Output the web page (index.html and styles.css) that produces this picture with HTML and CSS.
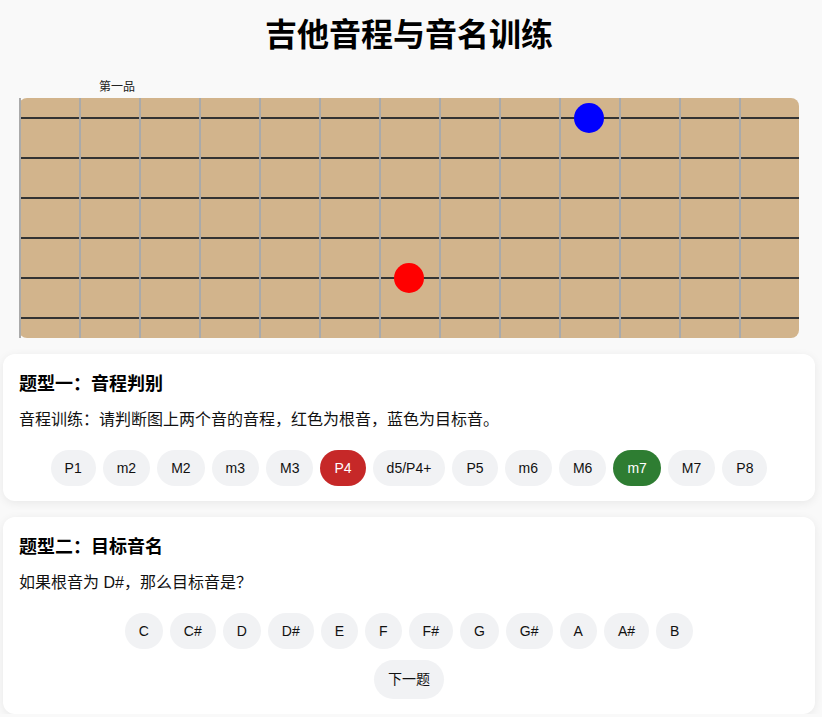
FILE: index.html
```html
<!DOCTYPE html>
<html lang="zh-CN">
<head>
<meta charset="utf-8">
<title>吉他音程与音名训练</title>
<link rel="stylesheet" href="styles.css">
</head>
<body>
<div class="app">
  <h1 class="title">吉他音程与音名训练</h1>
  <div class="fretboard-wrap">
    <div class="fret-label">第一品</div>
    <div class="board">
      <div class="strings">
        <div class="string"></div>
        <div class="string"></div>
        <div class="string"></div>
        <div class="string"></div>
        <div class="string"></div>
        <div class="string"></div>
      </div>
      <div class="frets">
        <div class="fret"></div><div class="fret"></div><div class="fret"></div><div class="fret"></div><div class="fret"></div><div class="fret"></div><div class="fret"></div><div class="fret"></div><div class="fret"></div><div class="fret"></div><div class="fret"></div><div class="fret"></div><div class="fret"></div>
      </div>
      <div class="dot dot-target"></div>
      <div class="dot dot-root"></div>
    </div>
  </div>

  <section class="card">
    <h3 class="card-title">题型一：音程判别</h3>
    <p class="card-text">音程训练：请判断图上两个音的音程，红色为根音，蓝色为目标音。</p>
    <div class="options">
      <button class="opt">P1</button>
      <button class="opt">m2</button>
      <button class="opt">M2</button>
      <button class="opt">m3</button>
      <button class="opt">M3</button>
      <button class="opt wrong">P4</button>
      <button class="opt">d5/P4+</button>
      <button class="opt">P5</button>
      <button class="opt">m6</button>
      <button class="opt">M6</button>
      <button class="opt right">m7</button>
      <button class="opt">M7</button>
      <button class="opt">P8</button>
    </div>
  </section>

  <section class="card card-two">
    <h3 class="card-title">题型二：目标音名</h3>
    <p class="card-text">如果根音为 D#，那么目标音是？</p>
    <div class="options">
      <button class="opt">C</button>
      <button class="opt">C#</button>
      <button class="opt">D</button>
      <button class="opt">D#</button>
      <button class="opt">E</button>
      <button class="opt">F</button>
      <button class="opt">F#</button>
      <button class="opt">G</button>
      <button class="opt">G#</button>
      <button class="opt">A</button>
      <button class="opt">A#</button>
      <button class="opt">B</button>
    </div>
    <div class="next-row">
      <button class="opt next">下一题</button>
    </div>
  </section>
</div>
</body>
</html>
```

FILE: styles.css
```css
* { box-sizing: border-box; }

html, body {
  margin: 0;
  padding: 0;
  background: #f9f9f9;
}

body {
  font-family: "Liberation Sans", "Noto Sans CJK SC", sans-serif;
  color: #111;
}

.app {
  width: 812px;
  margin-left: 3px;
  display: flex;
  flex-direction: column;
}

.title {
  margin: 15px 0 0;
  font-size: 32px;
  line-height: 40px;
  font-weight: 700;
  text-align: center;
  color: #000;
}

.fretboard-wrap {
  margin-top: 25px;
  padding-left: 16px;
}

.fret-label {
  padding-left: 80px;
  font-size: 12px;
  line-height: 14px;
  height: 14px;
  color: #222;
}

.board {
  position: relative;
  margin-top: 4px;
  width: 780px;
  height: 240px;
  background: #d2b48c;
  border-radius: 8px;
}

.strings {
  display: flex;
  flex-direction: column;
}

.string {
  position: relative;
  height: 40px;
}

.string::after {
  content: "";
  position: absolute;
  left: 0;
  right: 0;
  top: 19px;
  height: 2px;
  background: #333;
}

.frets {
  position: absolute;
  inset: 0;
  display: grid;
  grid-template-columns: repeat(13, 60px);
}

.fret {
  border-left: 2px solid #aaa;
}

.dot {
  position: absolute;
  width: 30px;
  height: 30px;
  border-radius: 50%;
}

.dot-target {
  left: 555px;
  top: 5px;
  background: #0000ff;
}

.dot-root {
  left: 375px;
  top: 165px;
  background: #ff0000;
}

.card {
  margin-top: 16px;
  padding: 16px 16px 15px;
  background: #fff;
  border-radius: 12px;
  box-shadow: 0 2px 10px rgba(0, 0, 0, 0.07);
}

.card-title {
  margin: 0 0 10px;
  font-size: 18px;
  line-height: 28px;
  font-weight: 700;
  color: #000;
}

.card-text {
  margin: 0 0 18px;
  font-size: 16px;
  line-height: 24px;
  color: #111;
}

.options {
  display: flex;
  flex-wrap: wrap;
  justify-content: center;
  gap: 7px;
}

.opt {
  font-family: "Liberation Sans", "Noto Sans CJK SC", sans-serif;
  font-size: 14px;
  line-height: 20px;
  height: 36px;
  padding: 8px 14px;
  border: none;
  border-radius: 18px;
  background: #f1f2f4;
  color: #111;
}

.opt.wrong {
  background: #c62828;
  color: #fff;
}

.opt.right {
  background: #2e7d32;
  color: #fff;
}

.next-row {
  display: flex;
  justify-content: center;
  margin-top: 11px;
}

.opt.next {
  height: 39px;
  line-height: 23px;
  border-radius: 20px;
}
```
